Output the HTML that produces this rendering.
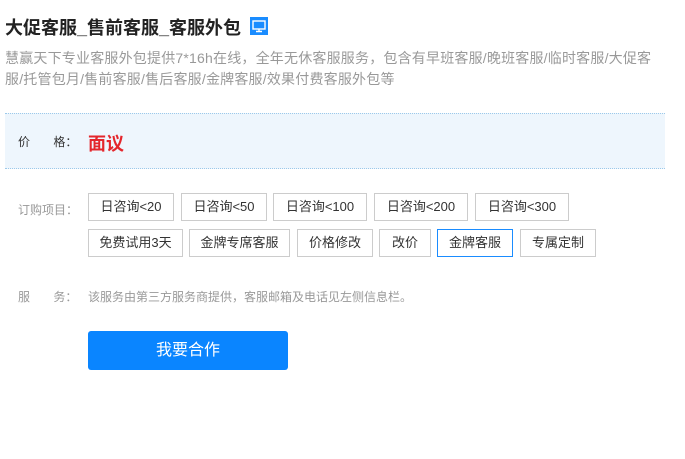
<!DOCTYPE html>
<html><head><meta charset="utf-8"><style>
*{margin:0;padding:0;box-sizing:border-box}
body{width:685px;height:459px;background:#fff;font-family:"Liberation Sans","Noto Sans CJK SC",sans-serif;position:relative;overflow:hidden}
.a{position:absolute;white-space:nowrap}
h1{position:absolute;left:5px;top:14px;font-size:18px;font-weight:bold;color:#222;white-space:nowrap}
.ic{position:absolute;left:250px;top:17px;width:18px;height:18px;background:#1a8cff}
.desc{position:absolute;left:5px;top:48px;width:662px;font-size:14px;letter-spacing:0.2px;line-height:21px;color:#999}
.band{position:absolute;left:5px;top:113px;width:660px;height:56px;background:#eef6fd;border-top:1px dotted #9cc9ea;border-bottom:1px dotted #9cc9ea}
.lbl{font-size:12px;color:#666}
.b{position:absolute;height:28px;border:1px solid #ccc;font-size:13px;color:#333;line-height:26px;text-align:center;background:#fff}
.btn{position:absolute;left:88px;top:331px;width:200px;height:39px;background:#0a85ff;border-radius:3px;color:#fff;font-size:16px;line-height:39px;text-align:center}
</style></head><body>
<h1>大促客服_售前客服_客服外包</h1>
<div class="ic"><svg width="18" height="18" viewBox="0 0 18 18"><rect x="3" y="4" width="12" height="8" fill="none" stroke="#fff" stroke-width="1.4"/><path d="M9 12v2M6 14.5h6" stroke="#fff" stroke-width="1.4"/></svg></div>
<div class="desc">慧赢天下专业客服外包提供7*16h在线，全年无休客服服务，包含有早班客服/晚班客服/临时客服/大促客服/托管包月/售前客服/售后客服/金牌客服/效果付费客服外包等</div>
<div class="band"></div>
<div class="a lbl" style="left:18px;top:133px;color:#333">价&nbsp;&nbsp;&nbsp;&nbsp;&nbsp;&nbsp;&nbsp;格：</div>
<div class="a" style="left:88px;top:130px;font-size:18px;font-weight:bold;color:#e4262c">面议</div>
<div class="a lbl" style="left:18px;top:201px;color:#999">订购项目：</div>
<div class="b" style="left:88px;top:193px;width:86px">日咨询&lt;20</div>
<div class="b" style="left:181px;top:193px;width:86px">日咨询&lt;50</div>
<div class="b" style="left:273px;top:193px;width:94px">日咨询&lt;100</div>
<div class="b" style="left:374px;top:193px;width:94px">日咨询&lt;200</div>
<div class="b" style="left:475px;top:193px;width:94px">日咨询&lt;300</div>
<div class="b" style="left:88px;top:229px;width:95px">免费试用3天</div>
<div class="b" style="left:189px;top:229px;width:101px">金牌专席客服</div>
<div class="b" style="left:297px;top:229px;width:76px">价格修改</div>
<div class="b" style="left:379px;top:229px;width:52px">改价</div>
<div class="b" style="left:437px;top:229px;width:76px;border-color:#1a8cff">金牌客服</div>
<div class="b" style="left:520px;top:229px;width:76px">专属定制</div>
<div class="a lbl" style="left:18px;top:288px;color:#999">服&nbsp;&nbsp;&nbsp;&nbsp;&nbsp;&nbsp;&nbsp;务：</div>
<div class="a lbl" style="left:88px;top:288px;color:#999">该服务由第三方服务商提供，客服邮箱及电话见左侧信息栏。</div>
<div class="btn">我要合作</div>
</body></html>
